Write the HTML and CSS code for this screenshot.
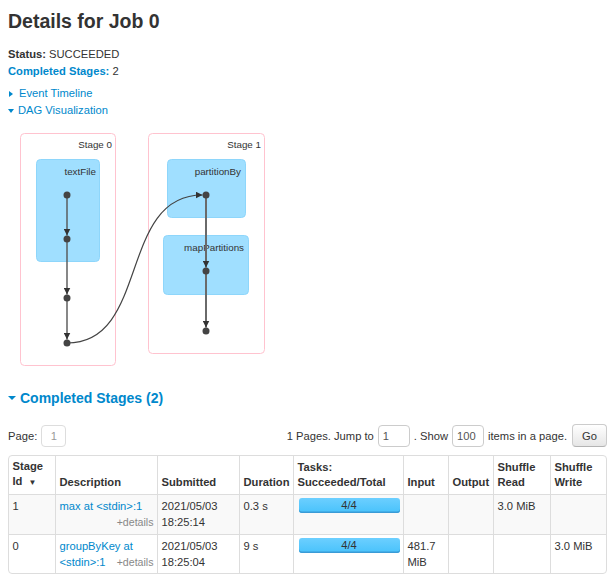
FILE: index.html
```html
<!DOCTYPE html>
<html>
<head>
<meta charset="utf-8">
<link rel="stylesheet" href="styles.css">
</head>
<body>
<div class="page">
  <h3 class="title">Details for Job 0</h3>
  <ul class="summary">
    <li><strong>Status:</strong> SUCCEEDED</li>
    <li><a class="link"><strong>Completed Stages:</strong></a> 2</li>
  </ul>
  <div class="toggles">
    <a class="toggle"><span class="arrow arrow-right"></span>Event Timeline</a>
    <a class="toggle"><span class="arrow arrow-down"></span>DAG Visualization</a>
  </div>
  <svg class="dag" width="300" height="260" viewBox="8 119 300 260" xmlns="http://www.w3.org/2000/svg">
    <defs>
      <marker id="arrowDown" viewBox="0 0 10 10" refX="10" refY="5" markerWidth="7" markerHeight="7" orient="auto" markerUnits="userSpaceOnUse">
        <path d="M0,0 L10,5 L0,10 z" fill="#333"/>
      </marker>
    </defs>
    <rect class="stage" x="20.5" y="133.5" width="95" height="232" rx="4"/>
    <rect class="stage" x="148.5" y="133.5" width="116" height="220" rx="4"/>
    <text class="label" x="112" y="147.5">Stage 0</text>
    <text class="label" x="261" y="147.5">Stage 1</text>
    <rect class="cluster" x="36.5" y="159.5" width="63" height="102" rx="4"/>
    <rect class="cluster" x="167.5" y="159.5" width="78" height="58" rx="4"/>
    <rect class="cluster" x="163.5" y="235.5" width="85" height="59" rx="4"/>
    <text class="label" x="96" y="174.5">textFile</text>
    <text class="label" x="241" y="174.5">partitionBy</text>
    <text class="label" x="244" y="250.5">mapPartitions</text>
    <path class="edge" d="M67,195 L67,235.5" marker-end="url(#arrowDown)"/>
    <path class="edge" d="M67,239 L67,294.5" marker-end="url(#arrowDown)"/>
    <path class="edge" d="M67,298 L67,339.5" marker-end="url(#arrowDown)"/>
    <path class="edge light" d="M206,195 L206,267.5" marker-end="url(#arrowDown)"/>
    <path class="edge light" d="M206,271 L206,327.5" marker-end="url(#arrowDown)"/>
    <path class="edge curve" d="M67,343 C150,343 118,195 202.5,195" marker-end="url(#arrowDown)"/>
    <circle class="node" cx="67" cy="195" r="3.5"/>
    <circle class="node" cx="67" cy="239" r="3.5"/>
    <circle class="node" cx="67" cy="298" r="3.5"/>
    <circle class="node" cx="67" cy="343" r="3.5"/>
    <circle class="node" cx="206" cy="195" r="3.5"/>
    <circle class="node" cx="206" cy="271" r="3.5"/>
    <circle class="node" cx="206" cy="331" r="3.5"/>
  </svg>
  <h4 class="section"><span class="arrow arrow-down big"></span>Completed Stages (2)</h4>
  <div class="pager">
    <div class="pager-left">
      <span>Page:</span>
      <span class="page-box">1</span>
    </div>
    <form class="pager-right">
      <span>1 Pages. Jump to</span>
      <input class="field" type="text" value="1">
      <span>. Show</span>
      <input class="field" type="text" value="100">
      <span>items in a page.</span>
      <button class="btn" type="button">Go</button>
    </form>
  </div>
  <table class="stages">
    <colgroup>
      <col style="width:46px"><col style="width:102px"><col style="width:82px"><col style="width:54px"><col style="width:110px"><col style="width:45px"><col style="width:45px"><col style="width:57px"><col style="width:56px">
    </colgroup>
    <thead>
      <tr>
        <th>Stage Id<span class="sort">▼</span></th>
        <th>Description</th>
        <th>Submitted</th>
        <th>Duration</th>
        <th>Tasks: Succeeded/Total</th>
        <th>Input</th>
        <th>Output</th>
        <th>Shuffle Read</th>
        <th>Shuffle Write</th>
      </tr>
    </thead>
    <tbody>
      <tr class="odd">
        <td>1</td>
        <td><a class="link">max at &lt;stdin&gt;:1</a><span class="details">+details</span></td>
        <td>2021/05/03 18:25:14</td>
        <td>0.3 s</td>
        <td><div class="bar">4/4</div></td>
        <td></td>
        <td></td>
        <td>3.0 MiB</td>
        <td></td>
      </tr>
      <tr>
        <td>0</td>
        <td><a class="link">groupByKey at &lt;stdin&gt;:1</a><span class="details">+details</span></td>
        <td>2021/05/03 18:25:04</td>
        <td>9 s</td>
        <td><div class="bar">4/4</div></td>
        <td>481.7 MiB</td>
        <td></td>
        <td></td>
        <td>3.0 MiB</td>
      </tr>
    </tbody>
  </table>
</div>
</body>
</html>
```
FILE: styles.css
```css
html, body {
  margin: 0;
  padding: 0;
  background: #fff;
}
body {
  font-family: "Liberation Sans", Arial, sans-serif;
  font-size: 11.2px;
  line-height: 16px;
  color: #333;
}
.page {
  padding: 0 8px;
}
.title {
  margin: 9px 0 0;
  font-size: 19.5px;
  line-height: 24px;
  font-weight: bold;
  color: #333;
}
.summary {
  list-style: none;
  margin: 13px 0 0;
  padding: 0;
}
.summary li {
  line-height: 17px;
}
.link {
  color: #0088cc;
  text-decoration: none;
}
.toggles {
  margin-top: 5px;
  display: flex;
  flex-direction: column;
}
.toggle {
  color: #0088cc;
  line-height: 17px;
  display: flex;
  align-items: center;
}
.arrow {
  display: inline-block;
  width: 0;
  height: 0;
}
.arrow-right {
  border-top: 3.5px solid transparent;
  border-bottom: 3.5px solid transparent;
  border-left: 4px solid #0088cc;
  margin-left: 1px;
  margin-right: 6px;
}
.arrow-down {
  border-left: 3.5px solid transparent;
  border-right: 3.5px solid transparent;
  border-top: 4px solid #0088cc;
  margin-right: 4px;
}
.arrow-down.big {
  border-left-width: 4px;
  border-right-width: 4px;
  border-top-width: 4.5px;
  margin-right: 4px;
}
.dag {
  display: block;
  margin-top: 0;
}
.dag .stage {
  fill: #fff;
  stroke: #ffc3cf;
  stroke-width: 1;
}
.dag .cluster {
  fill: #a0dfff;
  stroke: #8ed6fb;
  stroke-width: 1;
}
.dag .label {
  font-family: "Liberation Sans", Arial, sans-serif;
  font-size: 9.8px;
  fill: #333;
  text-anchor: end;
}
.dag .edge {
  fill: none;
  stroke: #555;
  stroke-width: 1.4;
}
.dag .edge.light {
  stroke: #6a6a6a;
  stroke-width: 2;
}
.dag .edge.curve {
  stroke: #444;
  stroke-width: 1.2;
}
.dag .node {
  fill: #444;
}
.section {
  margin: 9px 0 0;
  font-size: 14px;
  line-height: 20px;
  font-weight: bold;
  color: #0088cc;
  display: flex;
  align-items: center;
}
.pager {
  margin-top: 16px;
  display: flex;
  justify-content: space-between;
  align-items: center;
  height: 23px;
}
.pager-left {
  display: flex;
  align-items: center;
  gap: 4px;
}
.page-box {
  box-sizing: border-box;
  width: 25px;
  height: 22px;
  border: 1px solid #ddd;
  border-radius: 4px;
  color: #999;
  text-align: center;
  line-height: 20px;
}
.pager-right {
  margin: 0;
  display: flex;
  align-items: center;
  gap: 4px;
}
.field {
  box-sizing: border-box;
  width: 32px;
  height: 22px;
  margin: 0;
  border: 1px solid #ccc;
  border-radius: 4px;
  padding: 0 4px;
  font-family: "Liberation Sans", Arial, sans-serif;
  font-size: 11.2px;
  color: #555;
  background: #fff;
}
.btn {
  box-sizing: border-box;
  width: 35px;
  height: 23px;
  margin: 0 -1px 0 1px;
  padding: 0;
  border: 1px solid #ccc;
  border-bottom-color: #b3b3b3;
  border-radius: 4px;
  background: linear-gradient(to bottom, #ffffff, #e6e6e6);
  font-family: "Liberation Sans", Arial, sans-serif;
  font-size: 11.2px;
  color: #333;
}
.stages {
  margin-top: 8px;
  width: 599px;
  table-layout: fixed;
  border-collapse: separate;
  border-spacing: 0;
  border: 1px solid #ddd;
  border-radius: 4px;
}
.stages th,
.stages td {
  padding: 3.4px 3.5px;
  text-align: left;
  border-left: 1px solid #ddd;
  overflow-wrap: break-word;
}
.stages th:first-child,
.stages td:first-child {
  border-left: 0;
}
.stages th {
  vertical-align: bottom;
  font-weight: bold;
  line-height: 15px;
}
.stages td {
  vertical-align: top;
  border-top: 1px solid #ddd;
  line-height: 16px;
}
.stages tr.odd td {
  background: #f9f9f9;
}
.sort {
  font-size: 8px;
  margin-left: 6px;
}
.details {
  float: right;
  font-size: 10.6px;
  color: #888;
}
.bar {
  margin: 0 0 0 1px;
  height: 15px;
  line-height: 14px;
  border-radius: 3px;
  background: linear-gradient(to bottom, #6ccfff, #48c2fb);
  box-shadow: inset 0 -1.5px 0 #3a9bd6;
  text-align: center;
  color: #333;
}
```
